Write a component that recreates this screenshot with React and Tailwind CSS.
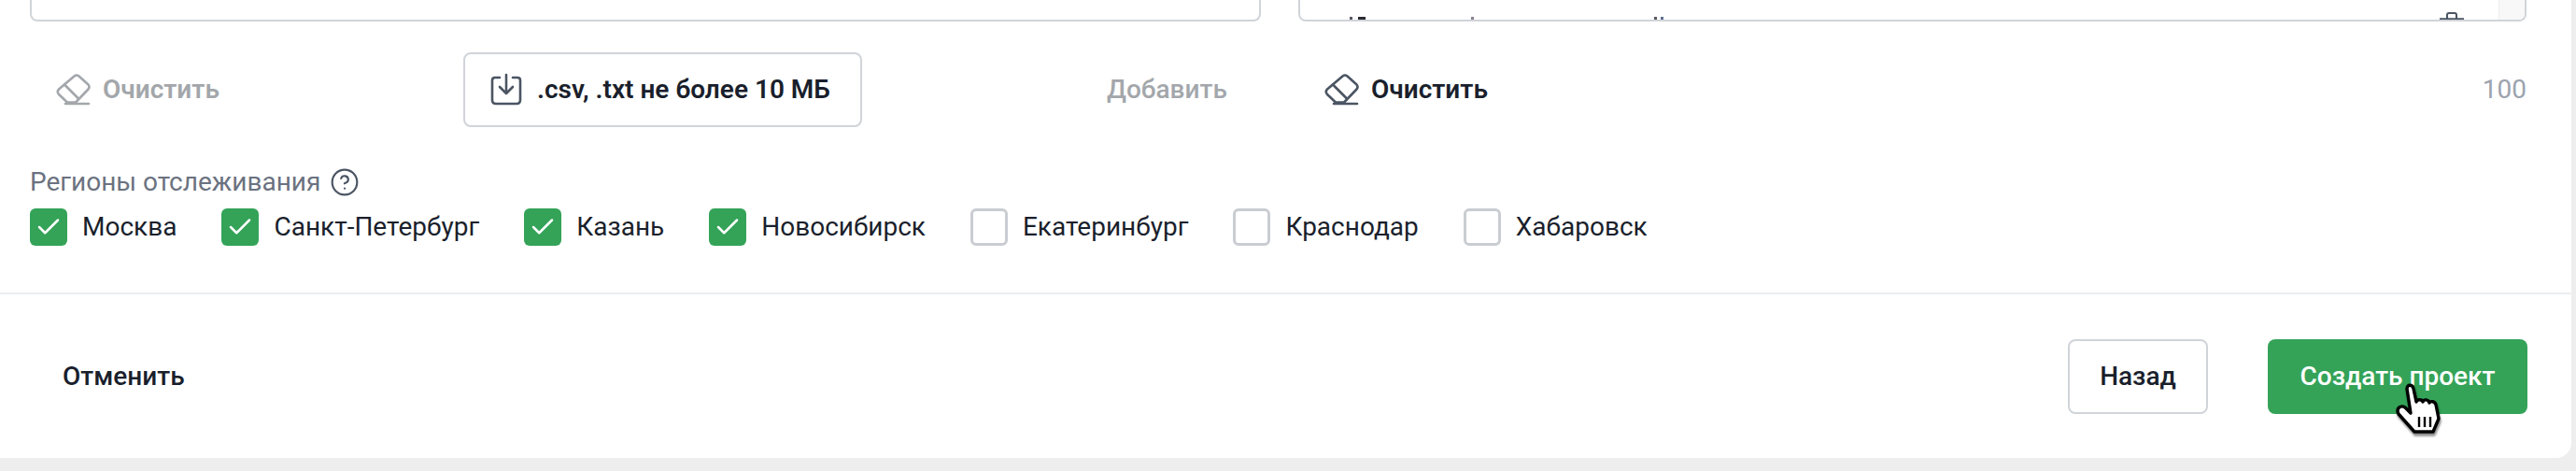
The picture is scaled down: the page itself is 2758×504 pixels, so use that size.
import { Check, CircleHelp } from "lucide-react";

const regions = [
  { name: "Москва", on: true },
  { name: "Санкт-Петербург", on: true },
  { name: "Казань", on: true },
  { name: "Новосибирск", on: true },
  { name: "Екатеринбург", on: false },
  { name: "Краснодар", on: false },
  { name: "Хабаровск", on: false },
];

function Eraser({ className }) {
  return (
    <svg viewBox="0 0 37 34" fill="none" stroke="currentColor" strokeWidth="2.6" strokeLinejoin="round" strokeLinecap="round" className={className}>
      <path d="M19.5 2.5 Q22 0.5 24.5 2.5 L34.5 11.5 Q36.5 14 34.5 16.5 L21 30.5 H12 L3 22 Q0.5 19 3 16.5 Z" />
      <path d="M9 11.5 L24 26.5" />
      <path d="M10 32 H35" />
    </svg>
  );
}

function UploadIcon({ className }) {
  return (
    <svg viewBox="0 0 36 36" fill="none" stroke="currentColor" strokeWidth="2.6" strokeLinecap="round" strokeLinejoin="round" className={className}>
      <path d="M11 5 H6 Q3 5 3 8 V29 Q3 33 7 33 H29 Q33 33 33 29 V8 Q33 5 30 5 H25" />
      <path d="M18 2 V21 M11 15 L18 22 L25 15" />
    </svg>
  );
}

function Cursor() {
  return (
    <svg viewBox="0 0 46 60" className="absolute left-[2566px] top-[410px] w-[46px] h-[60px] overflow-visible drop-shadow-[1px_3px_1px_rgba(0,0,0,0.45)]">
      <path
        d="M11 6 C11 1 17 1 18 6 L21 20 C22 17 27 17 28 20 C29 17 34 17 35 21 C36 19 41 19 42 23 L45 38 L39 52 H19 L2 33 C-1 27 4 23 9 26 L15 32 Z"
        fill="#fff"
        stroke="#000"
        strokeWidth="3.4"
        strokeLinejoin="round"
      />
      <path d="M24 36 V47 M30 36 V47 M36 36 V47" stroke="#000" strokeWidth="2.4" />
    </svg>
  );
}

export default function App() {
  return (
    <div className="relative w-[2758px] h-[504px] bg-[#eeeeee] font-['Roboto',sans-serif] overflow-hidden">
      <div className="w-[2753px] h-[490px] bg-white rounded-br-[16px] flex flex-col">
        <div className="flex-1 pl-[32px] pr-[48px] min-h-0">
          {/* textareas scrolled off the top */}
          <div className="flex gap-[40px]">
            <div className="w-[1318px] h-[23px] bg-white border-2 border-t-0 border-[#d0d4d9] rounded-b-[8px]" />
            <div className="relative w-[1315px] h-[23px] bg-white border-2 border-t-0 border-[#d0d4d9] rounded-b-[8px] overflow-hidden">
              <span className="absolute left-[53px] top-[18px] w-[3px] h-[3px] bg-[#5b5560]" />
              <span className="absolute left-[62px] top-[18px] w-[8px] h-[3px] bg-[#2b2b33]" />
              <span className="absolute left-[183px] top-[18px] w-[3px] h-[3px] bg-[#8a7f90]" />
              <span className="absolute left-[379px] top-[18px] w-[3px] h-[3px] bg-[#5b5560]" />
              <span className="absolute left-[386px] top-[18px] w-[3px] h-[3px] bg-[#5b7090]" />
              {/* top of the row's trash icon */}
              <svg viewBox="0 0 28 10" className="absolute left-[1219px] top-[12px] w-[28px] h-[10px]" fill="none" stroke="#4b5563" strokeWidth="2">
                <path d="M9 8 V4 Q9 2 11 2 H17 Q19 2 19 4 V8" />
                <path d="M1 8.5 H27" strokeWidth="2.4" />
              </svg>
              <div className="absolute right-0 top-0 w-[28px] h-full bg-[#f8f8f8] border-l border-[#eeeeee]" />
            </div>
          </div>

          <div className="flex h-[80px] mt-[33px]">
            <div className="flex-none w-[1360px] flex items-center">
              <button className="flex items-center gap-[13px] ml-[28px] text-[#a3a7ab] text-[28px] font-semibold whitespace-nowrap">
                <Eraser className="w-[37px] h-[34px]" />
                Очистить
              </button>
              <button className="ml-[261px] w-[427px] h-[80px] flex items-center gap-[15px] pl-[26px] bg-white border-2 border-[#d0d4d9] rounded-[8px] text-[#1a1f2c] text-[28px] font-semibold whitespace-nowrap">
                <UploadIcon className="w-[36px] h-[36px] text-[#4b5563]" />
                .csv, .txt не более 10 МБ
              </button>
              <span className="ml-[262px] text-[#a3a7ab] text-[28px] font-medium">Добавить</span>
            </div>
            <div className="flex-1 flex items-center justify-between">
              <button className="flex items-center gap-[13px] ml-[26px] text-[#1a1f2c] text-[28px] font-semibold">
                <Eraser className="w-[37px] h-[34px] text-[#4b5563]" />
                Очистить
              </button>
              <span className="text-[#9ca3af] text-[28px]">100</span>
            </div>
          </div>

          <div className="mt-[41px] flex items-center gap-[10px] text-[#6b7280] text-[28px] leading-[36px]">
            Регионы отслеживания
            <CircleHelp className="w-[32px] h-[32px] text-[#4b5563]" strokeWidth={1.6} />
          </div>

          <div className="mt-[10px] flex gap-[48px]">
            {regions.map((r) => (
              <label key={r.name} className="flex items-center gap-[16px] text-[#1a1f2c] text-[28px] h-[40px]">
                {r.on ? (
                  <span className="w-[40px] h-[40px] rounded-[6px] bg-[#34a358] flex items-center justify-center">
                    <Check className="w-[30px] h-[30px] text-white" strokeWidth={2} />
                  </span>
                ) : (
                  <span className="w-[40px] h-[40px] rounded-[6px] bg-white border-[3px] border-[#c9cdd2]" />
                )}
                {r.name}
              </label>
            ))}
          </div>
        </div>

        <div className="h-[177px] border-t-2 border-[#eceef0] flex items-center justify-between pl-[67px] pr-[47px]">
          <button className="text-[#1a1f2c] text-[28px] font-medium">Отменить</button>
          <div className="flex gap-[64px]">
            <button className="w-[150px] h-[80px] bg-white border-2 border-[#d0d4d9] rounded-[8px] text-[#1a1f2c] text-[28px] font-medium">Назад</button>
            <button className="w-[278px] h-[80px] bg-[#34a358] rounded-[8px] text-white text-[28px] font-medium">Создать проект</button>
          </div>
        </div>
      </div>
      <Cursor />
    </div>
  );
}
